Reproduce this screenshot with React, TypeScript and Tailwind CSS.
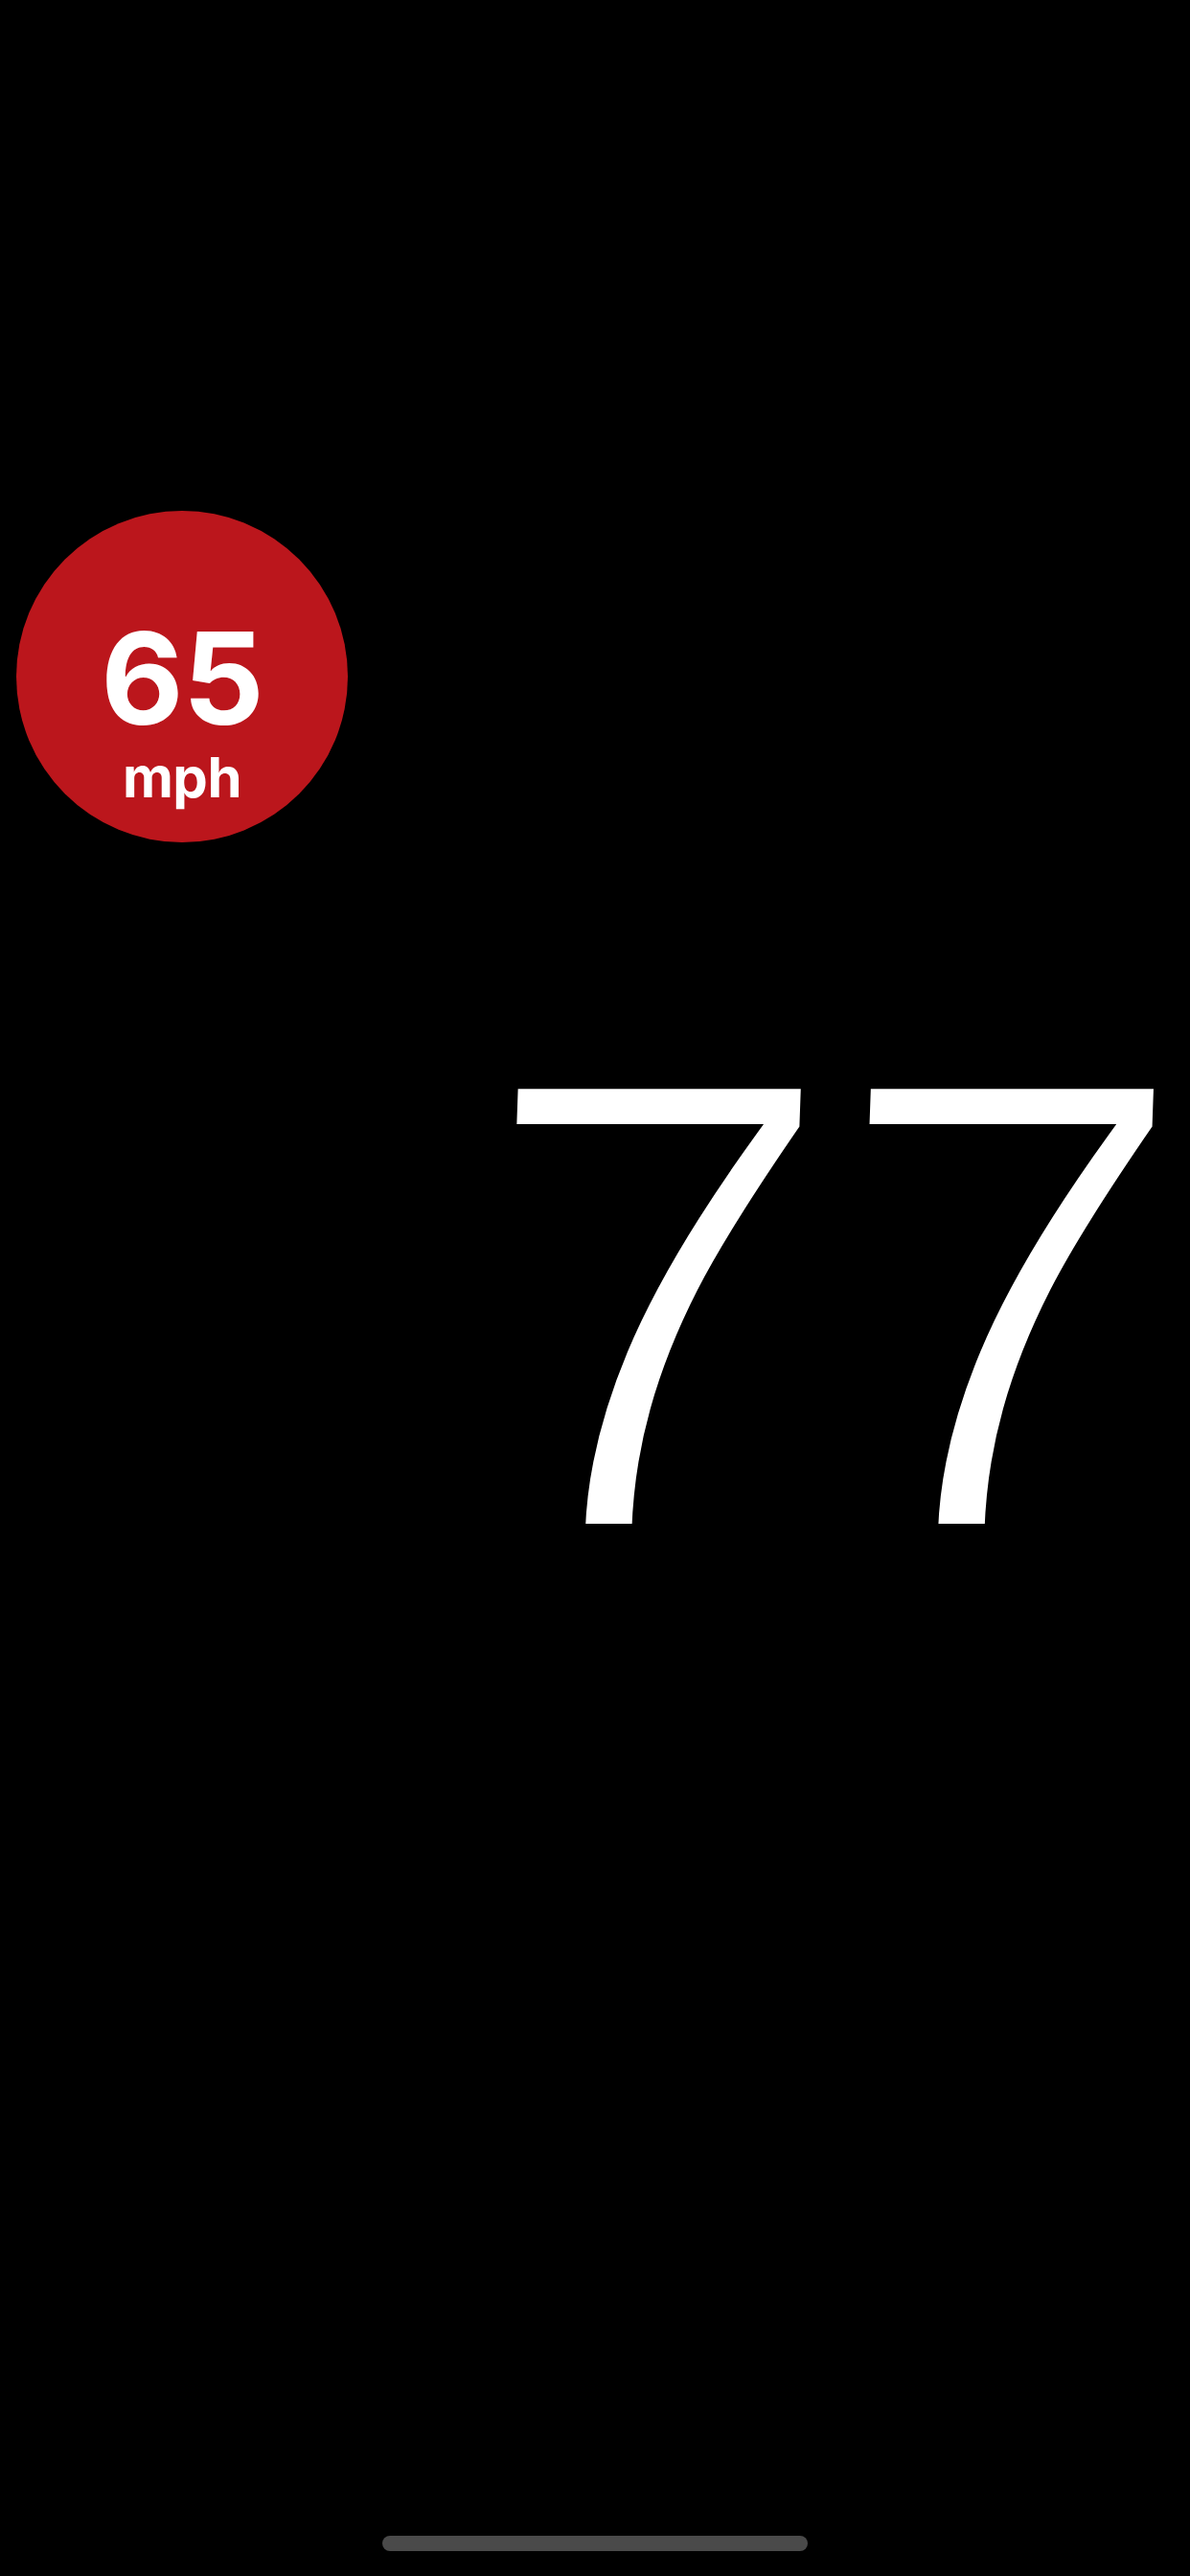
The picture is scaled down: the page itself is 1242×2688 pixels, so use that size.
export default function App() {
  return (
    <div className="flex h-[2688px] w-[1242px] flex-col overflow-hidden bg-black text-white [font-family:Inter,sans-serif]">
      <div className="ml-[17px] mt-[533px] flex h-[346px] w-[346px] flex-col items-center rounded-full bg-[#bb161c] pt-[112px]">
        <div className="h-[125px] text-[133px] font-bold leading-[125px] tracking-[-1px]">65</div>
        <div className="mt-[6px] h-[70px] text-[58px] font-bold leading-[70px] tracking-[-0.5px]">mph</div>
      </div>
      <div className="mt-[222px] flex h-[520px] justify-end pr-[6px] text-[680px] leading-[520px] tracking-[-10px] [font-family:'Liberation_Sans',sans-serif] [-webkit-text-stroke:14px_black]">
        <span className="origin-top -skew-x-2">77</span>
      </div>
      <div className="mx-auto mb-[26px] mt-auto h-4 w-[444px] rounded-full bg-[#4a4a4a]" />
    </div>
  );
}
